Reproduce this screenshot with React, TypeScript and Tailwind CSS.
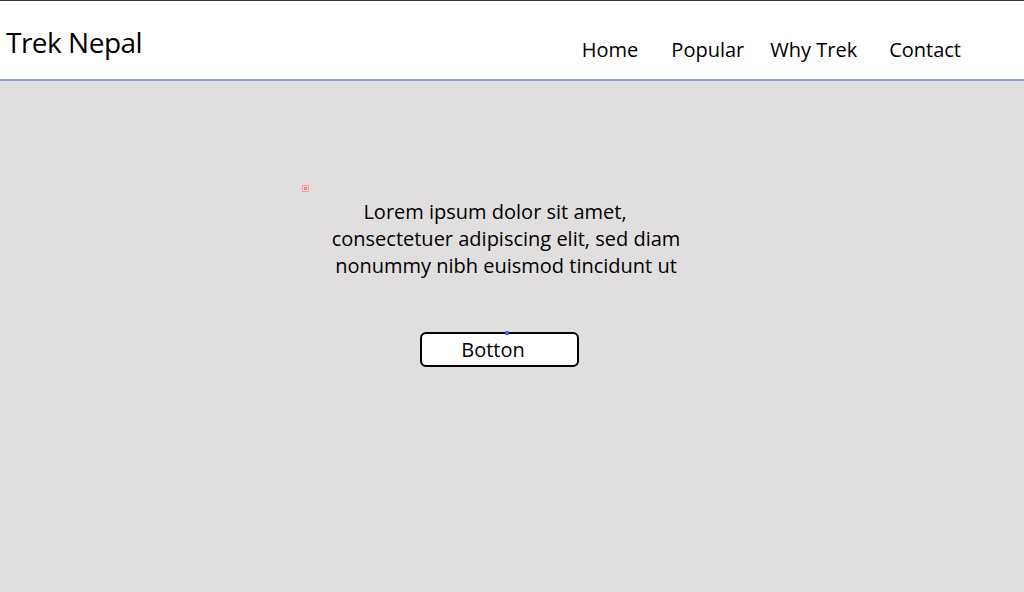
export default function App() {
  return (
    <div className="min-h-[592px] w-full bg-[#e0dedf] font-['Open_Sans',sans-serif] text-black">
      <header className="flex h-[81px] items-center justify-between border-t border-t-[#3a3a3a] border-b-2 border-b-[#8a9fdc] bg-white pl-[6px] pr-[63px]">
        <div className="mt-[4px] text-[28px] tracking-[-0.5px]">Trek Nepal</div>
        <nav className="mt-[20px] flex items-center text-[20px]">
          <a className="mr-[33px]">Home</a>
          <a className="mr-[26px]">Popular</a>
          <a className="mr-[32px]">Why Trek</a>
          <a>Contact</a>
        </nav>
      </header>
      <main className="relative flex flex-col items-center pt-[117px]">
        <span className="absolute left-[302px] top-[104px] flex h-[7px] w-[7px] items-center justify-center border border-[#f4a0a0] bg-[#fbd6d6]">
          <span className="h-[3px] w-[3px] border border-[#f07878]" />
        </span>
        <p className="-ml-[12px] text-center text-[20px] leading-[27px]">
          <span className="block pr-[22px]">Lorem ipsum dolor sit amet,</span>
          <span className="block">consectetuer adipiscing elit, sed diam</span>
          <span className="block">nonummy nibh euismod tincidunt ut</span>
        </p>
        <button className="relative mt-[53px] -ml-[26px] h-[35px] w-[159px] rounded-[6px] border-2 border-black bg-white pr-[12px] text-[20px] leading-none">
          Botton
          <span className="absolute -top-[3px] left-[83px] h-[4px] w-[4px] rounded-[1px] bg-[#2f66ff]" />
        </button>
      </main>
    </div>
  );
}
